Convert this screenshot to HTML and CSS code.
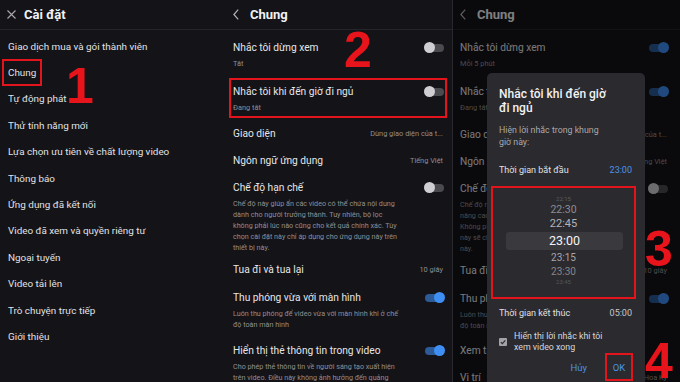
FILE: index.html
```html
<!DOCTYPE html>
<html lang="vi">
<head>
<meta charset="utf-8">
<link rel="stylesheet" href="styles.css">
</head>
<body>
<div class="screens">
  <section class="panel p1">
    <header class="bar">
      <svg class="ico-x" width="9" height="9" viewBox="0 0 9 9"><path d="M0.5 0.5L8.5 8.5M8.5 0.5L0.5 8.5" stroke="#a9a9ad" stroke-width="1.1" fill="none"/></svg>
      <h1>Cài đặt</h1>
    </header>
    <ul class="menu">
      <li>Giao dịch mua và gói thành viên</li>
      <li><span class="box">Chung</span></li>
      <li>Tự động phát</li>
      <li>Thử tính năng mới</li>
      <li>Lựa chọn ưu tiên về chất lượng video</li>
      <li>Thông báo</li>
      <li>Ứng dụng đã kết nối</li>
      <li>Video đã xem và quyền riêng tư</li>
      <li>Ngoại tuyến</li>
      <li>Video tải lên</li>
      <li>Trò chuyện trực tiếp</li>
      <li>Giới thiệu</li>
    </ul>
    <span class="num n1">1</span>
  </section>

  <section class="panel p2">
    <header class="bar bar-back">
      <svg class="ico-back" width="6" height="11" viewBox="0 0 6 11"><polyline points="5.2,0.6 0.9,5.5 5.2,10.4" stroke="#b4b4b8" stroke-width="1.2" fill="none"/></svg>
      <h1>Chung</h1>
    </header>
    <div class="rows">
      <div class="row two">
        <div class="head"><span class="t">Nhắc tôi dừng xem</span><span class="tg"></span></div>
        <div class="sub">Tắt</div>
      </div>
      <div class="row two marked">
        <div class="head"><span class="t">Nhắc tôi khi đến giờ đi ngủ</span><span class="tg"></span></div>
        <div class="sub">Đang tắt</div>
      </div>
      <div class="row one">
        <div class="head"><span class="t">Giao diện</span><span class="v">Dùng giao diện của t...</span></div>
      </div>
      <div class="row one">
        <div class="head"><span class="t">Ngôn ngữ ứng dụng</span><span class="v">Tiếng Việt</span></div>
      </div>
      <div class="row restrict">
        <div class="head"><span class="t">Chế độ hạn chế</span><span class="tg"></span></div>
        <div class="desc">Chế độ này giúp ẩn các video có thể chứa nội dung<br>dành cho người trưởng thành. Tuy nhiên, bộ lọc<br>không phải lúc nào cũng cho kết quả chính xác. Tùy<br>chọn cài đặt này chỉ áp dụng cho ứng dụng này trên<br>thiết bị này.</div>
      </div>
      <div class="row one">
        <div class="head"><span class="t">Tua đi và tua lại</span><span class="v">10 giây</span></div>
      </div>
      <div class="row zoom">
        <div class="head"><span class="t">Thu phóng vừa với màn hình</span><span class="tg on"></span></div>
        <div class="desc">Luôn thu phóng để video vừa với màn hình khi ở chế<br>độ toàn màn hình</div>
      </div>
      <div class="row zoom">
        <div class="head"><span class="t">Hiển thị thẻ thông tin trong video</span><span class="tg on"></span></div>
        <div class="desc">Cho phép thẻ thông tin về người sáng tạo xuất hiện<br>trên video. Điều này không ảnh hưởng đến quảng</div>
      </div>
    </div>
    <span class="num n2">2</span>
  </section>

  <section class="panel p3">
    <header class="bar bar-back">
      <svg class="ico-back" width="6" height="11" viewBox="0 0 6 11"><polyline points="5.2,0.6 0.9,5.5 5.2,10.4" stroke="#b4b4b8" stroke-width="1.2" fill="none"/></svg>
      <h1>Chung</h1>
    </header>
    <div class="rows">
      <div class="row two">
        <div class="head"><span class="t">Nhắc tôi dừng xem</span><span class="tg on"></span></div>
        <div class="sub">Mỗi 5 phút</div>
      </div>
      <div class="row two">
        <div class="head"><span class="t">Nhắc tôi khi đến giờ đi ngủ</span><span class="tg on"></span></div>
        <div class="sub">Đang tắt</div>
      </div>
      <div class="row one">
        <div class="head"><span class="t">Giao diện</span><span class="v">Dùng giao diện của t...</span></div>
      </div>
      <div class="row one">
        <div class="head"><span class="t">Ngôn ngữ ứng dụng</span><span class="v">Tiếng Việt</span></div>
      </div>
      <div class="row restrict">
        <div class="head"><span class="t">Chế độ hạn chế</span><span class="tg"></span></div>
        <div class="desc">Chế độ này giúp ẩn các video có thể chứa nội dung<br>nâng cao dành cho người trưởng thành.<br>Không phải lúc nào cũng chính xác. Tùy chọn<br>này sẽ chỉ áp dụng cho ứng dụng trên thiết bị<br>này.</div>
      </div>
      <div class="row one">
        <div class="head"><span class="t">Tua đi và tua lại</span><span class="v">10 giây</span></div>
      </div>
      <div class="row zoom">
        <div class="head"><span class="t">Thu phóng vừa với màn hình</span><span class="tg on"></span></div>
        <div class="desc">Luôn thu phóng để video vừa với màn hình khi ở chế<br>độ toàn màn hình</div>
      </div>
      <div class="row one">
        <div class="head"><span class="t">Xem trên TV</span><span class="v"></span></div>
      </div>
      <div class="row last">
        <div class="head"><span class="t">Vị trí</span><span class="v">Hoa Kỳ</span></div>
      </div>
    </div>
    <div class="dim"></div>
    <div class="dialog">
      <h2>Nhắc tôi khi đến giờ<br>đi ngủ</h2>
      <p class="dlg-desc">Hiện lời nhắc trong khung<br>giờ này:</p>
      <div class="dlg-line"><span>Thời gian bắt đầu</span><span class="blue">23:00</span></div>
      <div class="picker">
        <span class="pk p-a">22:15</span>
        <span class="pk p-b">22:30</span>
        <span class="pk p-c">22:45</span>
        <span class="pk p-sel">23:00</span>
        <span class="pk p-d">23:15</span>
        <span class="pk p-e">23:30</span>
        <span class="pk p-f">23:45</span>
      </div>
      <div class="dlg-line end"><span>Thời gian kết thúc</span><span class="grey">05:00</span></div>
      <div class="check">
        <svg width="8" height="8" viewBox="0 0 8 8"><rect width="8" height="8" rx="1" fill="#a3a3a6"/><polyline points="1.8,4.2 3.3,5.7 6.3,2.3" stroke="#2b2a2e" stroke-width="1.1" fill="none"/></svg>
        <span>Hiển thị lời nhắc khi tôi<br>xem video xong</span>
      </div>
      <div class="btns"><span class="btn">Hủy</span><span class="btn ok">OK</span></div>
    </div>
    <span class="num n3">3</span>
    <span class="num n4">4</span>
  </section>
</div>
</body>
</html>
```

FILE: styles.css
```css
* { box-sizing: border-box; }
html, body { margin: 0; padding: 0; }
body {
  width: 680px;
  height: 382px;
  overflow: hidden;
  background: #141317;
  font-family: Roboto, "Noto Sans", sans-serif;
  color: #e4e4e6;
}
.screens { display: flex; height: 382px; }
.panel { position: relative; flex: none; width: 226px; height: 382px; overflow: hidden; background: #141317; }
.p3 { width: 228px; border-left: 1px solid #2a292d; }

.bar {
  height: 30px;
  border-bottom: 1px solid #262529;
  display: flex;
  align-items: center;
  padding-left: 7px;
  gap: 8px;
}
.bar-back { gap: 11px; }
.bar h1 { margin: 0; font-size: 13px; font-weight: 700; color: #f2f2f4; }

.menu { list-style: none; margin: 0; padding: 3px 0 0 8px; }
.menu li { height: 26.4px; display: flex; align-items: center; font-size: 9.9px; color: #e2e2e4; white-space: nowrap; }
.menu .box { margin-left: -6px; padding: 0 4px; border: 2px solid #e3141c; height: 27px; line-height: 23px; }

.rows { padding-top: 3px; }
.row { padding: 0 7px; }
.p3 .row { padding-left: 7px; padding-right: 11px; }
.row.two { padding-top: 7px; padding-bottom: 7px; }
.row.one { padding-top: 6px; padding-bottom: 6px; }
.row.last { padding-top: 6px; padding-bottom: 0; }
.row.restrict { padding-top: 6px; padding-bottom: 3px; }
.row.zoom { padding-top: 7px; padding-bottom: 6px; }
.row.marked { position: relative; padding-bottom: 6px; }
.row.marked::before {
  content: "";
  position: absolute;
  left: 3px; right: 5px; top: 1px; bottom: 2px;
  border: 2px solid #e3141c;
}
.head { display: flex; justify-content: space-between; align-items: center; height: 15px; }
.t { font-size: 10.2px; color: #e6e6e8; white-space: nowrap; }
.v { font-size: 7.4px; color: #8f8f94; white-space: nowrap; padding-right: 2px; }
.sub { margin-top: 2px; font-size: 7.4px; line-height: 13px; color: #8f8f94; }
.desc { margin-top: 3px; font-size: 7.2px; line-height: 11px; color: #8f8f94; white-space: nowrap; }

.tg { position: relative; width: 19px; height: 8px; border-radius: 4px; background: #4b4a4f; flex: none; margin-right: 1px; }
.tg::after {
  content: "";
  position: absolute;
  left: -1px; top: -1.5px;
  width: 11px; height: 11px;
  border-radius: 50%;
  background: #cfcfd3;
}
.tg.on { background: #2c5b97; }
.tg.on::after { left: auto; right: -1px; background: #3f8ef3; }

.dim { position: absolute; inset: 0; background: rgba(0, 0, 0, 0.48); }

.dialog {
  position: absolute;
  left: 34px; top: 73px;
  width: 158px; height: 320px;
  background: #2b2a2e;
  border-radius: 5px;
  padding: 14px 13px 0 12px;
}
.dialog h2 { margin: 0; font-size: 12px; line-height: 14px; font-weight: 500; color: #f2f2f4; }
.dlg-desc { margin: 9px 0 0; font-size: 8.8px; line-height: 12px; color: #a9a9ad; }
.dlg-line { display: flex; justify-content: space-between; margin-top: 16px; font-size: 9px; line-height: 12px; color: #e0e0e2; }
.dlg-line.end { margin-top: 8px; }
.blue { color: #4b93e6; }
.grey { color: #c8c8cc; }

.picker {
  margin: 10px -4px 0 -8px;
  height: 113px;
  border: 2px solid #e3141c;
  padding-top: 7px;
  display: flex;
  flex-direction: column;
  align-items: center;
}
.pk { display: block; text-align: center; }
.p-a { height: 8px; line-height: 8px; font-size: 6px; color: #5e5e62; }
.p-b { height: 14px; line-height: 14px; font-size: 10.5px; color: #8d8d91; }
.p-c { height: 14px; line-height: 14px; font-size: 11px; color: #b4b4b8; }
.p-sel {
  align-self: stretch;
  margin: 1px 11px 0 13px;
  height: 18px; line-height: 18px;
  font-size: 12.5px;
  color: #f4f4f6;
  background: #3a393e;
  border-radius: 3px;
}
.p-d { height: 16px; line-height: 16px; font-size: 10px; color: #a6a6aa; }
.p-e { height: 12px; line-height: 12px; font-size: 10px; color: #86868a; }
.p-f { height: 8px; line-height: 8px; font-size: 6px; color: #56565a; }

.check { display: flex; align-items: center; gap: 7px; margin-top: 12px; }
.check svg { flex: none; }
.check span { font-size: 8.8px; line-height: 11px; color: #d8d8da; }

.btns { display: flex; justify-content: flex-end; align-items: center; height: 28px; margin-right: -1px; }
.btn { font-size: 9.5px; color: #4b93e6; }
.ok { width: 28px; height: 28px; margin-left: 18px; border: 2px solid #e3141c; display: flex; align-items: center; justify-content: center; }

.num { position: absolute; font-family: "Liberation Sans", Arial, sans-serif; font-weight: 700; font-size: 50px; line-height: 1; color: #e8141c; }
.n1 { left: 66px; top: 61px; }
.n2 { left: 118px; top: 25px; }
.n3 { left: 192px; top: 224px; }
.n4 { left: 192px; top: 336px; }
```
